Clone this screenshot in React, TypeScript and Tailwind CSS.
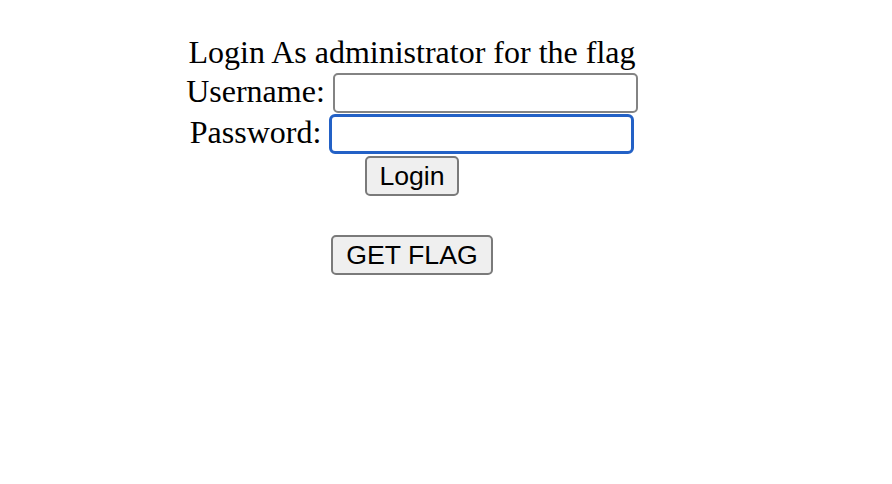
export default function App() {
  return (
    <div className="h-[484px] w-[892px] bg-white">
      <div className="flex w-[824px] flex-col items-center pt-[34px] font-['Liberation_Serif',serif] text-[32px] leading-[37px] text-black">
        <div>Login As administrator for the flag</div>

        <div className="mt-[2px] flex items-start gap-2">
          <span>Username:</span>
          <input
            type="text"
            className="h-[40px] w-[305px] rounded-[5px] border-2 border-[#838383] bg-white px-1 font-['Liberation_Sans',sans-serif] text-[26.67px] outline-none"
          />
        </div>

        <div className="mt-[1px] flex items-start gap-2">
          <span>Password:</span>
          <input
            type="password"
            className="h-[40px] w-[305px] rounded-[6px] border-[3px] border-[#2361c6] bg-white px-1 font-['Liberation_Sans',sans-serif] text-[26.67px] outline-none"
          />
        </div>

        <button className="mt-[2px] h-[40px] w-[94px] rounded-[5px] border-2 border-[#7a7a7a] bg-[#efefef] font-['Liberation_Sans',sans-serif] text-[26.67px] leading-none text-black">
          Login
        </button>

        <button className="mt-[39px] h-[40px] w-[162px] rounded-[5px] border-2 border-[#7a7a7a] bg-[#efefef] font-['Liberation_Sans',sans-serif] text-[26.67px] leading-none text-black">
          GET FLAG
        </button>
      </div>
    </div>
  );
}
